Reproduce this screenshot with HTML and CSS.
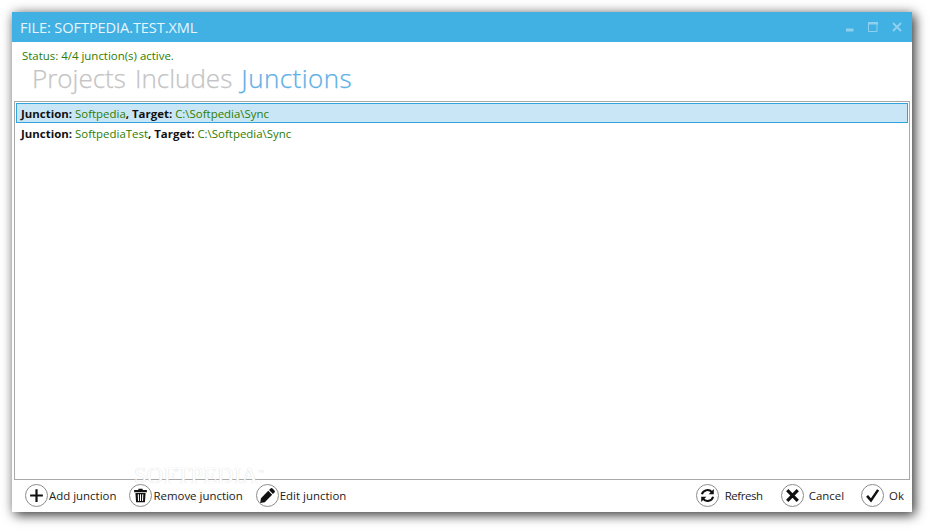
FILE: index.html
```html
<!DOCTYPE html>
<html lang="en">
<head>
<meta charset="utf-8">
<title>FILE: SOFTPEDIA.TEST.XML</title>
<link rel="stylesheet" href="styles.css">
</head>
<body>
<div class="window">
  <header class="titlebar">
    <span class="title">FILE: SOFTPEDIA.TEST.XML</span>
    <div class="controls">
      <svg width="8" height="10" viewBox="0 0 8 10"><rect x="0" y="7" width="7" height="2"/></svg>
      <svg width="10" height="10" viewBox="0 0 10 10"><path d="M.5 1.5h8.5v8H.5z" fill="none" stroke-width="1"/><rect x="0" y="0" width="10" height="2"/></svg>
      <svg width="10" height="10" viewBox="0 0 10 10"><path d="M1 1l8 8M9 1l-8 8" fill="none" stroke-width="2"/></svg>
    </div>
  </header>
  <div class="status">Status: 4/4 junction(s) active.</div>
  <nav class="tabs">
    <span class="tab">Projects</span>
    <span class="tab">Includes</span>
    <span class="tab active">Junctions</span>
  </nav>
  <div class="list">
    <div class="row selected"><b>Junction:</b> <span class="val">Softpedia</span><b>, Target:</b> <span class="val">C:\Softpedia\Sync</span></div>
    <div class="row"><b>Junction:</b> <span class="val">SoftpediaTest</span><b>, Target:</b> <span class="val">C:\Softpedia\Sync</span></div>
  </div>
  <footer class="toolbar">
    <div class="group">
      <button class="btn tight"><span class="circle"><svg width="20" height="20" viewBox="0 0 20 20"><path d="M10 2.5v15M2.5 10h15" stroke="#111" stroke-width="2.6" fill="none"/></svg></span>Add junction</button>
      <button class="btn tight"><span class="circle"><svg width="20" height="20" viewBox="0 0 20 20"><path fill="#111" fill-rule="evenodd" d="M2.5 3.5h15v2.6h-15zM7.5 2h5v1.5h-5zM4 7h12l-.8 11H4.8zM6.8 8.6l.3 7.8h1.2l-.2-7.8zM9.4 8.6v7.8h1.2V8.6zM12 8.6l-.2 7.8H13l.3-7.8z"/></svg></span>Remove junction</button>
      <button class="btn tight"><span class="circle"><svg width="20" height="20" viewBox="0 0 20 20"><path fill="#111" d="M13.6 1.8a1.6 1.6 0 0 1 2.3 0l2.3 2.3a1.6 1.6 0 0 1 0 2.3l-1.8 1.8-4.6-4.6zM10.9 4.5l4.6 4.6-8.7 8.7-5.4 1 .9-5.7z"/></svg></span>Edit junction</button>
    </div>
    <div class="group right">
      <button class="btn"><span class="circle"><svg width="20" height="20" viewBox="0 0 20 20"><path fill="none" stroke="#111" stroke-width="2.4" d="M3.4 8.6A6.8 6.8 0 0 1 15.2 6M16.6 11.4A6.8 6.8 0 0 1 4.8 14"/><path fill="#111" d="M17.4 2.4v6h-6zM2.6 17.6v-6h6z"/></svg></span><span class="narrow">Refresh</span></button>
      <button class="btn"><span class="circle"><svg width="20" height="20" viewBox="0 0 20 20"><path d="M3.8 3.8l12.4 12.4M16.2 3.8L3.8 16.2" stroke="#111" stroke-width="3.8" fill="none"/></svg></span>Cancel</button>
      <button class="btn"><span class="circle"><svg width="20" height="20" viewBox="0 0 20 20"><path d="M3.6 10.4l4.6 5.4 8.4-12.4" stroke="#111" stroke-width="3" fill="none"/></svg></span>Ok</button>
    </div>
  </footer>
  <div class="mark">SOFTPEDIA<sup>™</sup></div>
  <div class="mark-url">www.softpedia.com</div>
</div>
</body>
</html>
```
FILE: styles.css
```css
* { box-sizing: border-box; }
html, body { margin: 0; height: 100%; background: #fff; overflow: hidden; }
body { padding: 12px 20px 20px 12px; font-family: "Open Sans", "Noto Sans", sans-serif; }
.window {
  position: relative;
  width: 900px;
  height: 500px;
  background: #fff;
  display: flex;
  flex-direction: column;
  box-shadow: 3px 3px 11px rgba(0, 0, 0, .75), 0 0 12px rgba(0, 0, 0, .14);
}
.titlebar {
  height: 30px;
  flex: none;
  background: #41b0e2;
  color: #e6f5fc;
  display: flex;
  align-items: center;
  justify-content: space-between;
  padding: 0 10px 0 8px;
}
.title { font-size: 14.6px; letter-spacing: -.1px; }
.controls { display: flex; align-items: center; gap: 14px; }
.controls svg { fill: #8fd0ee; stroke: #8fd0ee; }
.status { height: 17px; margin-top: 6px; padding-left: 10px; font-size: 11.45px; line-height: 16px; color: #2d7d00; }
.tabs { display: flex; gap: 9px; height: 36px; padding-left: 20px; font-size: 26px; font-weight: 300; line-height: 27px; letter-spacing: 0; color: #c4c4c4; -webkit-text-stroke: .25px currentColor; }
.tab.active { color: #5cb0e6; letter-spacing: .45px; }
.list {
  flex: 1;
  margin: 0 2px;
  border: 1px solid #a9a9a9;
  padding: 1px;
  font-size: 11.45px;
}
.row { height: 20px; line-height: 19px; padding-left: 4px; color: #2d7d00; border: 1px solid transparent; }
.row b { color: #111; font-weight: 700; }
.row.selected { background: #c9e6f6; border-color: #35a3dc; }
.toolbar { position: relative; z-index: 1; flex: none; height: 32px; display: flex; justify-content: space-between; align-items: center; padding: 0 8px 1px 13px; }
.group { display: flex; gap: 13px; }
.group.right { gap: 17px; }
.btn {
  display: flex;
  align-items: center;
  gap: 5px;
  padding: 0;
  border: 0;
  background: none;
  font: inherit;
  font-size: 11.45px;
  color: #222;
}
.btn.tight { gap: 1px; }
.narrow { letter-spacing: -.4px; margin: 0 1px; }
.circle {
  width: 23px;
  height: 23px;
  border: 1px solid #8c8c8c;
  border-radius: 50%;
  display: flex;
  align-items: center;
  justify-content: center;
}
.circle svg { width: 17px; height: 17px; }
.mark {
  position: absolute;
  left: 122px;
  top: 451px;
  font-family: "Liberation Serif", serif;
  font-size: 23px;
  letter-spacing: 0;
  color: #fff;
  text-shadow: 0 0 1px #c9c9c9;
}
.mark sup { font-size: 6px; }
.mark-url {
  position: absolute;
  left: 145px;
  top: 480px;
  font-size: 8.5px;
  color: #eee;
}
```
